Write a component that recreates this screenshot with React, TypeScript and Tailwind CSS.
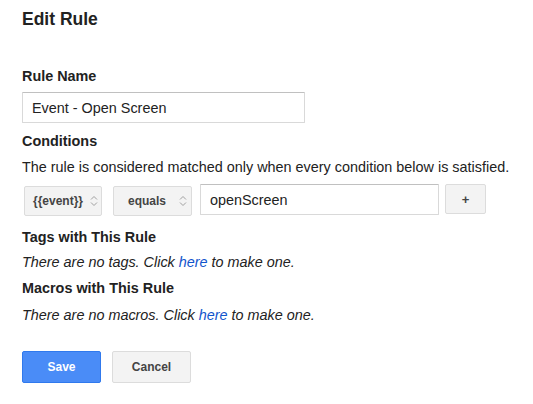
import React from 'react';

const Chevrons: React.FC = () => (
  <svg width="8" height="14" viewBox="0 0 8 14" className="shrink-0">
    <path d="M1 5.5 L4 2.5 L7 5.5" fill="none" stroke="#a0a0a0" strokeWidth="1" />
    <path d="M1 8.5 L4 11.5 L7 8.5" fill="none" stroke="#a0a0a0" strokeWidth="1" />
  </svg>
);

const FakeSelect: React.FC<{ label: string; width: string }> = ({ label, width }) => (
  <div
    className={`${width} h-[30px] mt-[2px] flex items-center gap-[7px] pl-[8px] pr-[4px] bg-[#f3f3f3] border border-[#dcdcdc] rounded-[2px] text-[12px] font-bold text-[#444]`}
  >
    <span className="flex-1 text-center whitespace-nowrap">{label}</span>
    <Chevrons />
  </div>
);

const App: React.FC = () => {
  return (
    <div className="w-[533px] h-[404px] bg-white pl-[22px] pt-[9px] font-['Liberation_Sans',Arial,sans-serif] text-[#222]">
      <h1 className="text-[17.5px] leading-[20px] font-bold">Edit Rule</h1>

      <div className="mt-[39px] text-[14.4px] leading-[16px] font-bold">Rule Name</div>
      <input
        className="mt-[8px] w-[283px] h-[31px] px-[9px] text-[14.4px] text-[#222] border border-[#d9d9d9] border-t-[#c0c0c0] rounded-[1px] outline-none"
        defaultValue="Event - Open Screen"
      />

      <div className="mt-[10px] text-[14.4px] leading-[16px] font-bold">Conditions</div>
      <p className="mt-[10px] text-[14.4px] leading-[16px]">
        The rule is considered matched only when every condition below is satisfied.
      </p>

      <div className="mt-[9px] flex items-start">
        <div className="ml-[2px]">
          <FakeSelect label="{{event}}" width="w-[78px]" />
        </div>
        <div className="ml-[11px]">
          <FakeSelect label="equals" width="w-[79px]" />
        </div>
        <input
          className="ml-[8px] w-[239px] h-[31px] px-[9px] text-[14.4px] text-[#222] border border-[#d9d9d9] border-t-[#c0c0c0] rounded-[1px] outline-none"
          defaultValue="openScreen"
        />
        <button className="ml-[6px] w-[41px] h-[30px] bg-[#f3f3f3] border border-[#dcdcdc] rounded-[2px] text-[13px] font-bold text-[#444] leading-none">
          +
        </button>
      </div>

      <div className="mt-[13px] text-[14.4px] leading-[16px] font-bold">Tags with This Rule</div>
      <p className="mt-[9px] text-[14.4px] leading-[16px] italic">
        There are no tags. Click <a className="text-[#15c]">here</a> to make one.
      </p>

      <div className="mt-[10px] text-[14.4px] leading-[16px] font-bold">Macros with This Rule</div>
      <p className="mt-[11px] text-[14.4px] leading-[16px] italic">
        There are no macros. Click <a className="text-[#15c]">here</a> to make one.
      </p>

      <div className="mt-[28px] flex gap-[11px]">
        <button className="w-[79px] h-[32px] bg-[#4a8cf7] border border-[#3079ed] rounded-[2px] text-[12px] font-bold text-white">
          Save
        </button>
        <button className="w-[79px] h-[32px] bg-[#f3f3f3] border border-[#dcdcdc] rounded-[2px] text-[12px] font-bold text-[#444]">
          Cancel
        </button>
      </div>
    </div>
  );
};

export default App;
